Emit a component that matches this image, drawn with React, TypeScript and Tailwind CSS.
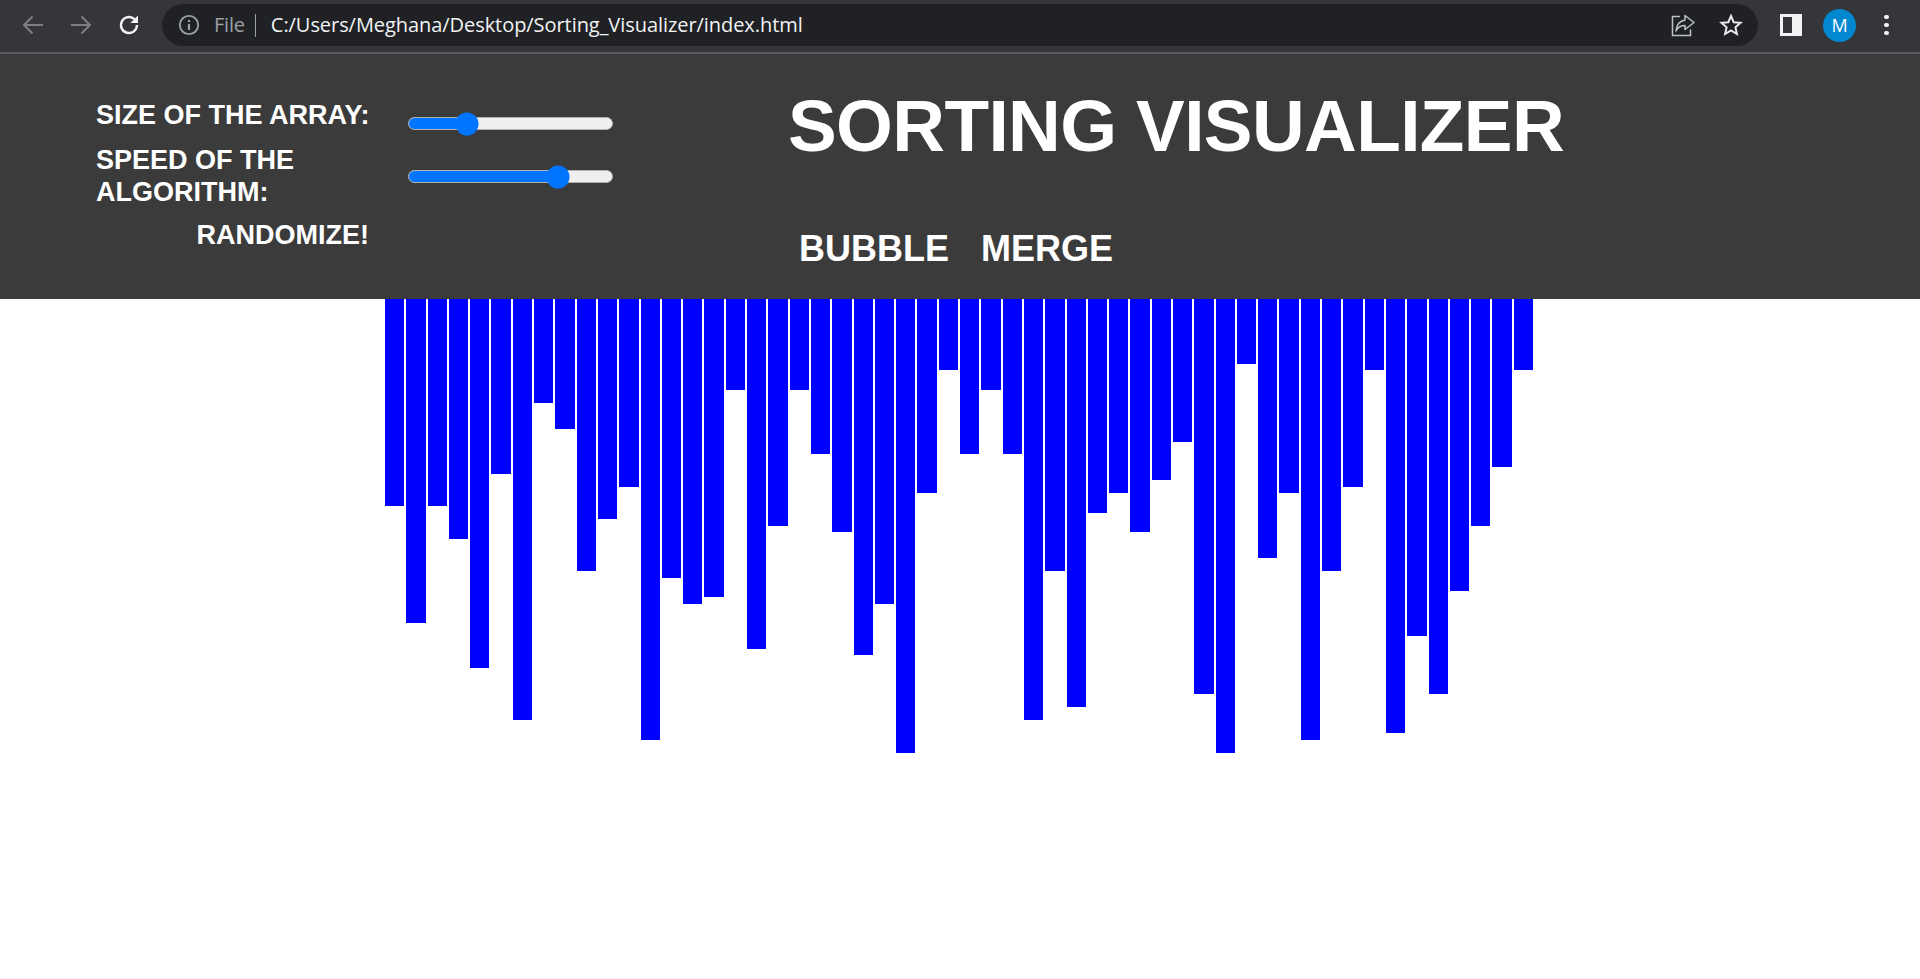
const bars = [
  207, 324, 207, 240, 369, 175, 421, 104, 130, 272, 220, 188, 441, 279, 305, 298, 91, 350, 227, 91, 155, 233, 356, 305,
  454, 194, 71, 155, 91, 155, 421, 272, 408, 214, 194, 233, 181, 143, 395, 454, 65, 259, 194, 441, 272, 188, 71, 434,
  337, 395, 292, 227, 168, 71,
];

function Slider({ fill, className }: { fill: number; className: string }) {
  return (
    <div className={`relative h-[13px] w-[205px] rounded-full bg-[#efefef] border border-[#b2b2b2] ${className}`}>
      <div className="h-full rounded-full bg-[#0075ff]" style={{ width: fill }} />
      <div
        className="absolute top-1/2 h-[23px] w-[23px] -translate-x-1/2 -translate-y-1/2 rounded-full bg-[#0075ff]"
        style={{ left: fill }}
      />
    </div>
  );
}

function BrowserBar() {
  return (
    <div className="flex h-[54px] items-start border-b-2 border-[#5c5d5f] bg-[#35363a] font-['Open_Sans',sans-serif]">
      {/* Nav buttons */}
      <div className="flex h-[50px] w-[162px] items-center pl-[21px]">
        <svg viewBox="0 0 24 24" className="h-6 w-6 text-[#7d7f82]" fill="none" stroke="currentColor" strokeWidth="2">
          <path d="M22 12H3.500M11.500 3.500 3 12l8.500 8.500" />
        </svg>
        <svg viewBox="0 0 24 24" className="ml-6 h-6 w-6 text-[#7d7f82]" fill="none" stroke="currentColor" strokeWidth="2">
          <path d="M2 12h18.500M12.500 3.500 21 12l-8.500 8.500" />
        </svg>
        <svg viewBox="0 0 24 24" className="ml-6 h-6 w-6 text-[#f1f3f4]" fill="none" stroke="currentColor" strokeWidth="2.400">
          <path d="M20 12a8 8 0 1 1-2.500-5.800" />
          <path d="M21 2.500v7.600h-7.600z" fill="currentColor" stroke="none" />
        </svg>
      </div>

      {/* Address bar */}
      <div className="mt-1 flex h-[42px] w-[1596px] items-center rounded-full bg-[#202124]">
        <svg viewBox="0 0 24 24" className="ml-4 h-[22px] w-[22px] text-[#9aa0a6]" fill="none" stroke="currentColor" strokeWidth="2">
          <circle cx="12" cy="12" r="10" />
          <path d="M12 11v6.500" strokeWidth="2.400" />
          <path d="M12 6.500v2.400" strokeWidth="2.400" />
        </svg>
        <span className="ml-[14px] text-[20px] tracking-[-0.2px] text-[#9aa0a6]">File</span>
        <span className="ml-[10px] h-[23px] w-px bg-[#9aa0a6]" />
        <span className="ml-[15px] text-[20px] tracking-[-0.06px] text-[#f1f3f4]">C:/Users/Meghana/Desktop/Sorting_Visualizer/index.html</span>
        <svg viewBox="0 0 24 24" className="ml-auto h-6 w-6 text-[#bdc1c6]" fill="none" stroke="currentColor" strokeWidth="1.500">
          <path d="M9 3.500H1.500v19h18v-6" />
          <path d="M14 2.500 23 9.500l-9 7V12.500c-4 0-7 1.500-9 5.500 0.500-5.500 3.500-10 9-11z" strokeLinejoin="round" />
        </svg>
        <svg viewBox="0 0 24 24" className="ml-6 mr-[15px] h-6 w-6 text-[#e8eaed]" fill="none" stroke="currentColor" strokeWidth="2">
          <path d="m12 3 2.700 6.200 6.800.600-5.100 4.500 1.500 6.700-5.900-3.500-5.900 3.500 1.500-6.700-5.100-4.500 6.800-.600z" strokeLinejoin="miter" />
        </svg>
      </div>

      {/* Right side */}
      <div className="flex h-[50px] flex-1 items-center pl-[22px]">
        <svg viewBox="0 0 22 22" className="h-[22px] w-[22px]">
          <path d="M0 0h22v22H0zM3 3v16h9V3z" fill="#f1f3f4" fillRule="evenodd" />
        </svg>
        <div className="ml-[21px] flex h-[33px] w-[33px] items-center justify-center rounded-full bg-[#0288d1] text-[18px] text-white">
          M
        </div>
        <div className="ml-[28px] flex flex-col gap-[3.500px]">
          <span className="h-[4.500px] w-[4.500px] rounded-full bg-[#f1f3f4]" />
          <span className="h-[4.500px] w-[4.500px] rounded-full bg-[#f1f3f4]" />
          <span className="h-[4.500px] w-[4.500px] rounded-full bg-[#f1f3f4]" />
        </div>
      </div>
    </div>
  );
}

export default function App() {
  return (
    <div className="h-[979px] overflow-hidden bg-white">
      <BrowserBar />

      <header className="flex h-[245px] bg-[#3b3b3b] pl-[96px] font-['Liberation_Sans',Arial,sans-serif] font-bold text-white">
        {/* Controls */}
        <div className="grid w-[517px] grid-cols-[273px_205px] content-start gap-x-[39px] pt-[45px] text-[27px] leading-[32px]">
          <span className="whitespace-nowrap">SIZE OF THE ARRAY:</span>
          <Slider fill={58} className="mt-[18px]" />
          <span className="mt-[13px] w-[271px]">SPEED OF THE ALGORITHM:</span>
          <Slider fill={149} className="mt-[39px]" />
          <span className="mt-[11px] text-right">RANDOMIZE!</span>
        </div>

        {/* Title + algorithms */}
        <div className="ml-[175px] flex flex-col">
          <h1 className="mt-[29px] whitespace-nowrap text-[73px] leading-[85px] tracking-[-0.6px]">SORTING VISUALIZER</h1>
          <div className="ml-[11px] mt-[60px] flex gap-[32px] text-[36px] leading-[41px]">
            <span>BUBBLE</span>
            <span>MERGE</span>
          </div>
        </div>
      </header>

      {/* Bars */}
      <div className="ml-[384px] flex w-[1150px] items-start">
        {bars.map((h, i) => (
          <div key={i} className="mx-px flex-1 bg-[#0000ff]" style={{ height: h }} />
        ))}
      </div>
    </div>
  );
}
